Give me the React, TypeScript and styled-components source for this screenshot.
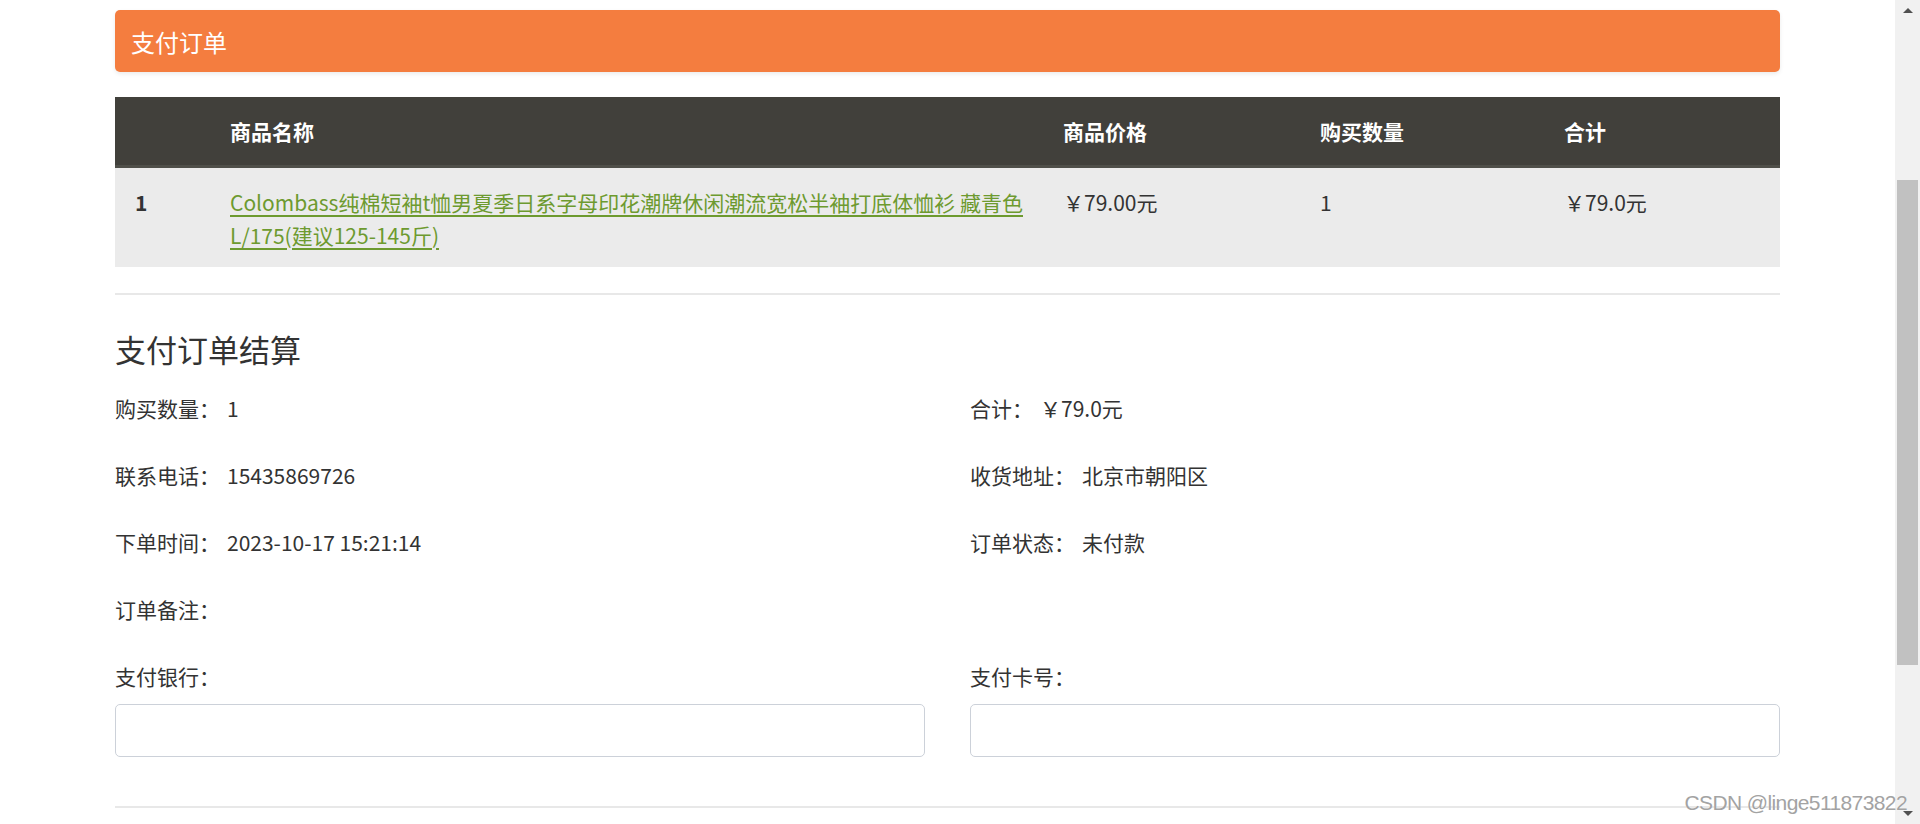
import React from 'react';
import styled, { createGlobalStyle } from 'styled-components';

const GlobalStyle = createGlobalStyle`
  html, body {
    margin: 0;
    padding: 0;
    background: #ffffff;
  }
  body {
    font-family: "Noto Sans CJK SC", "Noto Sans", sans-serif;
    color: #333333;
  }
  * {
    box-sizing: border-box;
  }
`;

interface OrderItem {
  index: number;
  name: string;
  price: string;
  quantity: number;
  total: string;
}

interface InfoField {
  label: string;
  value?: string;
}

const items: OrderItem[] = [
  {
    index: 1,
    name: 'Colombass纯棉短袖t恤男夏季日系字母印花潮牌休闲潮流宽松半袖打底体恤衫 藏青色 L/175(建议125-145斤)',
    price: '￥79.00元',
    quantity: 1,
    total: '￥79.0元',
  },
];

const summary: InfoField[] = [
  { label: '购买数量：', value: '1' },
  { label: '合计：', value: '￥79.0元' },
  { label: '联系电话：', value: '15435869726' },
  { label: '收货地址：', value: '北京市朝阳区' },
  { label: '下单时间：', value: '2023-10-17 15:21:14' },
  { label: '订单状态：', value: '未付款' },
  { label: '订单备注：' },
];

const Viewport = styled.div`
  position: relative;
  display: flex;
  height: 100vh;
  overflow: hidden;
`;

const Page = styled.main`
  flex: 1;
  overflow: hidden;
`;

const Container = styled.div`
  width: 1665px;
  margin: 0 auto;
  padding-top: 10px;
`;

const PanelHeader = styled.div`
  height: 62px;
  display: flex;
  align-items: center;
  padding: 0 16px;
  background: #f47d3f;
  border-radius: 5px;
  box-shadow: 0 2px 4px rgba(0, 0, 0, 0.08);
  color: #ffffff;
  font-size: 24px;
`;

const OrderTable = styled.table`
  width: 100%;
  margin-top: 25px;
  border-collapse: collapse;
  table-layout: fixed;
  font-size: 21px;
`;

const HeadCell = styled.th<{ $width: number }>`
  width: ${({ $width }) => $width}px;
  height: 69px;
  padding: 0 20px;
  background: #41403b;
  border-bottom: 3px solid #4f4f49;
  color: #ffffff;
  font-weight: 700;
  text-align: left;
`;

const BodyCell = styled.td<{ $bold?: boolean }>`
  padding: 18px 20px 15px;
  background: #ebebeb;
  vertical-align: top;
  line-height: 33px;
  color: #333333;
  font-weight: ${({ $bold }) => ($bold ? 700 : 400)};
`;

const ProductLink = styled.a`
  color: #6d9a2f;
  text-decoration: underline;
  text-underline-offset: 4px;
  cursor: pointer;
`;

const Divider = styled.hr<{ $gap: number }>`
  margin: ${({ $gap }) => $gap}px 0 0;
  border: none;
  border-top: 2px solid #e8e8e8;
`;

const SectionTitle = styled.h3`
  margin: 35px 0 25px;
  font-size: 31px;
  line-height: 37px;
  font-weight: 400;
  color: #333333;
`;

const InfoGrid = styled.div`
  display: grid;
  grid-template-columns: 1fr 1fr;
  column-gap: 45px;
  row-gap: 34px;
  font-size: 21px;
  line-height: 33px;
`;

const Field = styled.div`
  display: flex;
  align-items: center;
  min-height: 33px;
`;

const InputField = styled.div`
  display: flex;
  flex-direction: column;
  gap: 11px;
`;

const Label = styled.span`
  color: #333333;
`;

const Value = styled.span`
  margin-left: 7px;
  color: #333333;
`;

const TextInput = styled.input`
  width: 100%;
  height: 53px;
  padding: 0 14px;
  border: 1px solid #ccd1d9;
  border-radius: 5px;
  font-size: 21px;
  font-family: inherit;
  outline: none;
`;

const ScrollRail = styled.div`
  width: 25px;
  display: flex;
  flex-direction: column;
  background: #f1f1f1;
`;

const ScrollArrow = styled.div<{ $down?: boolean }>`
  height: 21px;
  display: flex;
  align-items: center;
  justify-content: center;

  &::before {
    content: '';
    width: 0;
    height: 0;
    border-left: 5px solid transparent;
    border-right: 5px solid transparent;
    ${({ $down }) =>
      $down ? 'border-top: 5px solid #505050;' : 'border-bottom: 5px solid #505050;'}
  }
`;

const ScrollTrack = styled.div`
  flex: 1;
  display: flex;
  justify-content: center;
`;

const ScrollThumb = styled.div<{ $offset: number; $size: number }>`
  width: 21px;
  height: ${({ $size }) => $size}px;
  margin-top: ${({ $offset }) => $offset}px;
  background: #c1c1c1;
`;

const Watermark = styled.div`
  position: absolute;
  right: 13px;
  bottom: 11px;
  font-family: "Liberation Sans", Arial, sans-serif;
  font-size: 21px;
  letter-spacing: -0.6px;
  line-height: 1;
  color: #a3a3a3;
  text-shadow: 0 0 1px #ffffff;
  pointer-events: none;
`;

const columns = [
  { title: '', width: 95 },
  { title: '商品名称', width: 833 },
  { title: '商品价格', width: 257 },
  { title: '购买数量', width: 244 },
  { title: '合计', width: 236 },
];

export default function App() {
  return (
    <>
      <GlobalStyle />
      <Viewport>
        <Page>
          <Container>
            <PanelHeader>支付订单</PanelHeader>

            <OrderTable>
              <thead>
                <tr>
                  {columns.map((col, i) => (
                    <HeadCell key={i} $width={col.width}>
                      {col.title}
                    </HeadCell>
                  ))}
                </tr>
              </thead>
              <tbody>
                {items.map((item) => (
                  <tr key={item.index}>
                    <BodyCell $bold>{item.index}</BodyCell>
                    <BodyCell>
                      <ProductLink>{item.name}</ProductLink>
                    </BodyCell>
                    <BodyCell>{item.price}</BodyCell>
                    <BodyCell>{item.quantity}</BodyCell>
                    <BodyCell>{item.total}</BodyCell>
                  </tr>
                ))}
              </tbody>
            </OrderTable>

            <Divider $gap={26} />

            <SectionTitle>支付订单结算</SectionTitle>

            <InfoGrid>
              {summary.map((f) => (
                <Field key={f.label}>
                  <Label>{f.label}</Label>
                  {f.value && <Value>{f.value}</Value>}
                </Field>
              ))}
              <Field />
              <InputField>
                <Label>支付银行：</Label>
                <TextInput type="text" />
              </InputField>
              <InputField>
                <Label>支付卡号：</Label>
                <TextInput type="text" />
              </InputField>
            </InfoGrid>

            <Divider $gap={49} />
          </Container>
        </Page>

        <ScrollRail>
          <ScrollArrow />
          <ScrollTrack>
            <ScrollThumb $offset={159} $size={485} />
          </ScrollTrack>
          <ScrollArrow $down />
        </ScrollRail>

        <Watermark>CSDN @linge511873822</Watermark>
      </Viewport>
    </>
  );
}
